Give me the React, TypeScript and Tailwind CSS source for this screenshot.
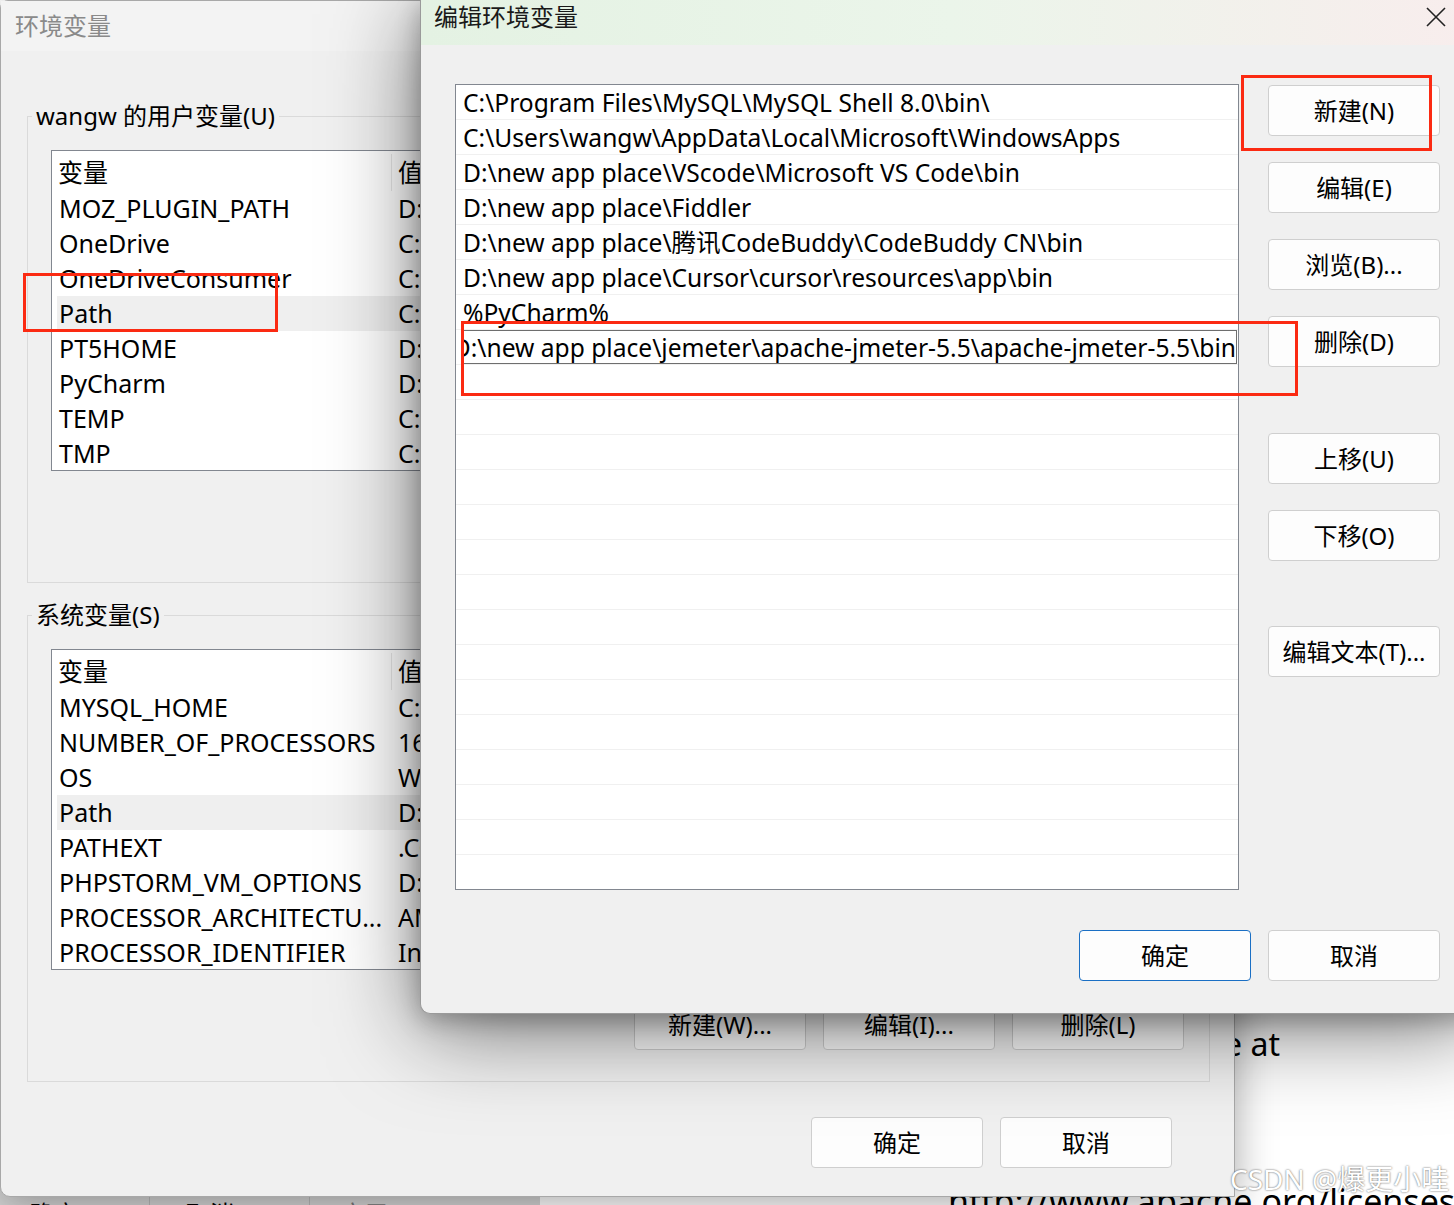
import React from "react";

const userVars: [string, string][] = [
  ["MOZ_PLUGIN_PATH", "D:\\new app place\\Foxit"],
  ["OneDrive", "C:\\Users\\wangw\\OneDrive"],
  ["OneDriveConsumer", "C:\\Users\\wangw\\OneDrive"],
  ["Path", "C:\\Program Files\\MySQL"],
  ["PT5HOME", "D:\\new app place\\Cisco"],
  ["PyCharm", "D:\\new app place\\PyCharm"],
  ["TEMP", "C:\\Users\\wangw\\AppData\\Local\\Temp"],
  ["TMP", "C:\\Users\\wangw\\AppData\\Local\\Temp"],
];

const sysVars: [string, string][] = [
  ["MYSQL_HOME", "C:\\Program Files\\MySQL"],
  ["NUMBER_OF_PROCESSORS", "16"],
  ["OS", "Windows_NT"],
  ["Path", "D:\\new app place\\python"],
  ["PATHEXT", ".COM;.EXE;.BAT;.CMD"],
  ["PHPSTORM_VM_OPTIONS", "D:\\new app place\\PhpStorm"],
  ["PROCESSOR_ARCHITECTU...", "AMD64"],
  ["PROCESSOR_IDENTIFIER", "Intel64 Family 6"],
];

const paths = [
  "C:\\Program Files\\MySQL\\MySQL Shell 8.0\\bin\\",
  "C:\\Users\\wangw\\AppData\\Local\\Microsoft\\WindowsApps",
  "D:\\new app place\\VScode\\Microsoft VS Code\\bin",
  "D:\\new app place\\Fiddler",
  "D:\\new app place\\腾讯CodeBuddy\\CodeBuddy CN\\bin",
  "D:\\new app place\\Cursor\\cursor\\resources\\app\\bin",
  "%PyCharm%",
];

function Btn({ label, primary, className = "" }: { label: string; primary?: boolean; className?: string }) {
  return (
    <div
      className={`flex h-[51px] w-[172px] items-center justify-center rounded-[4px] border bg-[#fdfdfd] text-[24px] text-black ${
        primary ? "border-[#1a6fc4]" : "border-[#cfcfcf]"
      } ${className}`}
    >
      {label}
    </div>
  );
}

function VarList({ rows, selected }: { rows: [string, string][]; selected: string }) {
  return (
    <div className="h-[321px] w-[1134px] overflow-hidden border border-[#828790] bg-white text-[25px] text-black">
      <div className="flex h-[40px] items-center pt-[3px]">
        <div className="ml-[5px] flex h-full w-[335px] items-center border-r border-[#e8e8e8] pl-[1px]">变量</div>
        <div className="pl-[6px]">值</div>
      </div>
      {rows.map(([k, v]) => (
        <div key={k} className={`ml-[5px] flex h-[35px] items-center ${k === selected ? "bg-[#efefef]" : ""}`}>
          <div className="w-[335px] whitespace-nowrap pl-[2px]">{k}</div>
          <div className="whitespace-nowrap pl-[6px]">{v}</div>
        </div>
      ))}
    </div>
  );
}

function Group({ label, children, className = "" }: { label: string; children: React.ReactNode; className?: string }) {
  return (
    <fieldset className={`ml-[26px] w-[1183px] border border-[#dadada] ${className}`}>
      <legend className="ml-[4px] px-[4px] text-[24px] leading-[32px] text-black">{label}</legend>
      {children}
    </fieldset>
  );
}

export default function App() {
  return (
    <div className="relative h-[1205px] w-[1454px] overflow-hidden bg-white font-[family-name:Noto_Sans,Noto_Sans_CJK_SC,sans-serif]">
      {/* document behind */}
      <div className="absolute right-[174px] top-[1020px] whitespace-nowrap text-[32px] text-black">License at</div>
      <div className="absolute left-[948px] top-[1176px] whitespace-nowrap text-[34px] text-black">
        http://www.apache.org/licenses/LICENSE-2.0
      </div>

      {/* third window behind */}
      <div className="absolute left-0 top-[1180px] flex h-[40px] w-[540px] items-start bg-[#d4d4d4] pt-[16px] text-[24px] text-black">
        <div className="ml-[30px] w-[120px] border-r border-[#b8b8b8]">确定</div>
        <div className="ml-[34px] w-[126px] border-r border-[#b8b8b8] pl-[2px]">取消</div>
        <div className="ml-[30px] text-[#777]">应用(A)</div>
      </div>

      {/* 环境变量 */}
      <div className="absolute left-0 top-0 flex h-[1197px] w-[1235px] flex-col rounded-bl-[10px] rounded-tl-[8px] border border-[#a8a8a8] bg-[#f0f0f0] shadow-[0_6px_40px_rgba(0,0,0,0.35)]">
        <div className="flex h-[50px] items-center bg-[#f3f3f3] pl-[14px] text-[24px] text-[#8a8a8a]">环境变量</div>
        <Group label="wangw 的用户变量(U)" className="mt-[49px] h-[483px]">
          <div className="ml-[23px] mt-[18px]">
            <VarList rows={userVars} selected="Path" />
          </div>
        </Group>
        <Group label="系统变量(S)" className="mt-[16px] h-[483px]">
          <div className="ml-[23px] mt-[18px]">
            <VarList rows={sysVars} selected="Path" />
          </div>
          <div className="mr-[25px] mt-[29px] flex justify-end gap-[17px]">
            <Btn label="新建(W)..." />
            <Btn label="编辑(I)..." />
            <Btn label="删除(L)" />
          </div>
        </Group>
        <div className="mr-[62px] mt-[35px] flex justify-end gap-[17px]">
          <Btn label="确定" />
          <Btn label="取消" />
        </div>
      </div>

      {/* 编辑环境变量 */}
      <div className="absolute left-[420px] top-0 h-[1014px] w-[1060px] rounded-bl-[10px] border-b border-l border-[#9a9a9a] bg-[#f0f0f0] shadow-[0_14px_90px_rgba(0,0,0,0.55),0_6px_24px_rgba(0,0,0,0.25)]">
        <div className="flex h-[45px] items-start bg-linear-to-r from-[#e4f2e3] via-[#ebf5ea] to-[#f8eded] pl-[13px]">
          <div className="text-[24px] leading-[34px] text-[#1a1a1a]">编辑环境变量</div>
          <svg className="ml-auto mr-[34px] mt-[7px]" width="20" height="20" viewBox="0 0 20 20">
            <path d="M1 1L19 19M19 1L1 19" stroke="#222" strokeWidth="1.6" fill="none" />
          </svg>
        </div>
        <div className="pl-[34px] pt-[39px]">
          <div className="flex">
            <div className="h-[806px] w-[784px] border border-[#828790] bg-white text-[24.6px] text-black">
              {Array.from({ length: 22 }).map((_, i) => {
                if (i === 7) {
                  return (
                    <div key={i} className="flex h-[35px] items-end border-b border-[#f0f0f0] pl-[7px] pr-[1px]">
                      <div className="flex h-[34px] w-full items-center justify-end overflow-hidden whitespace-nowrap border-b border-r border-t border-[#6e6e6e] pt-[2px]">
                        D:\new app place\jemeter\apache-jmeter-5.5\apache-jmeter-5.5\bin
                      </div>
                    </div>
                  );
                }
                return (
                  <div key={i} className="flex h-[35px] items-center whitespace-nowrap border-b border-[#f0f0f0] pl-[7px] pt-[3px]">
                    {paths[i] ?? ""}
                  </div>
                );
              })}
            </div>
            <div className="ml-[29px] flex flex-col pt-[1px]">
              <Btn label="新建(N)" />
              <Btn label="编辑(E)" className="mt-[26px]" />
              <Btn label="浏览(B)..." className="mt-[26px]" />
              <Btn label="删除(D)" className="mt-[26px]" />
              <Btn label="上移(U)" className="mt-[66px]" />
              <Btn label="下移(O)" className="mt-[26px]" />
              <Btn label="编辑文本(T)..." className="mt-[65px]" />
            </div>
          </div>
          <div className="mt-[40px] flex gap-[17px] pl-[624px]">
            <Btn label="确定" primary />
            <Btn label="取消" />
          </div>
        </div>
      </div>

      {/* annotations */}
      <div className="absolute left-[23px] top-[273px] h-[59px] w-[255px] border-[3px] border-[#fb2a12]" />
      <div className="absolute left-[1241px] top-[75px] h-[76px] w-[191px] border-[3px] border-[#fb2a12]" />
      <div className="absolute left-[461px] top-[321px] h-[75px] w-[837px] border-[3px] border-[#fb2a12]" />

      {/* watermark */}
      <div className="absolute left-[1230px] top-[1158px] whitespace-nowrap text-[28px] text-white [text-shadow:0_0_2px_rgba(0,0,0,0.7)]">
        CSDN @爆更小哇
      </div>
    </div>
  );
}
